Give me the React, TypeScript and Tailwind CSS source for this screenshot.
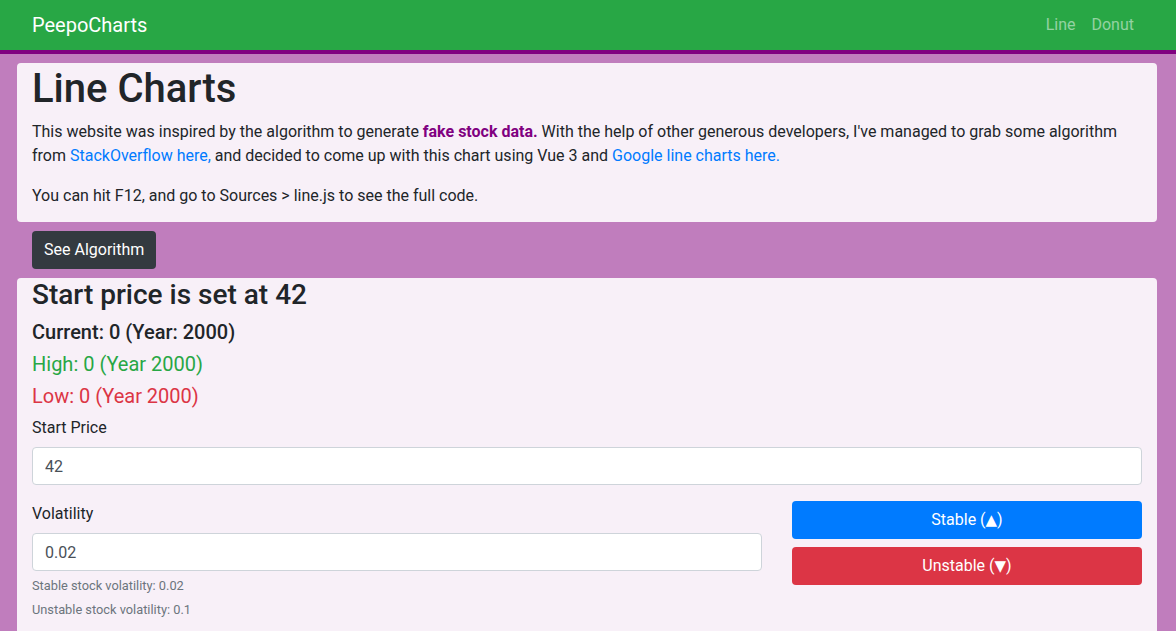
export default function App() {
  return (
    <div className="min-h-screen bg-[#c07dbd] font-['Roboto',sans-serif] text-[16px] leading-[24px] text-[#212529]">
      <nav className="flex h-[54px] items-center justify-between border-b-4 border-[#800080] bg-[#28a745] pl-8 pr-[34px]">
        <a href="#" className="text-[20px] leading-[30px] text-white">
          PeepoCharts
        </a>
        <div className="flex">
          <a href="#" className="px-2 text-white/50">
            Line
          </a>
          <a href="#" className="px-2 text-white/50">
            Donut
          </a>
        </div>
      </nav>

      <main className="flex flex-col pl-[17px] pr-[19px] pt-[9px]">
        <section className="rounded bg-[#f8f0f8] px-[15px] pt-[2px] pb-[14px]">
          <h1 className="text-[40px] font-medium leading-[48px]">Line Charts</h1>
          <p className="mt-[7px]">
            This website was inspired by the algorithm to generate{" "}
            <strong className="font-bold text-[#800080]">fake stock data.</strong> With the help of other generous
            developers, I've managed to grab some algorithm from{" "}
            <a href="#" className="text-[#007bff]">
              StackOverflow here,
            </a>{" "}
            and decided to come up with this chart using Vue 3 and{" "}
            <a href="#" className="text-[#007bff]">
              Google line charts here.
            </a>
          </p>
          <p className="mt-4">You can hit F12, and go to Sources &gt; line.js to see the full code.</p>
        </section>

        <div className="px-[15px] pt-[9px] pb-[9px]">
          <button className="h-[38px] rounded bg-[#343a40] px-3 text-white">See Algorithm</button>
        </div>

        <section className="rounded bg-[#f8f0f8] px-[15px] pb-10">
          <h3 className="mb-2 text-[28px] font-medium leading-[34px]">Start price is set at 42</h3>
          <h5 className="mb-2 text-[20px] font-medium leading-[24px]">Current: 0 (Year: 2000)</h5>
          <p className="mb-2 text-[20px] leading-[24px] text-[#28a745]">High: 0 (Year 2000)</p>
          <p className="mb-2 text-[20px] leading-[24px] text-[#dc3545]">Low: 0 (Year 2000)</p>

          <div className="mb-[17px]">
            <label className="mb-[7px] block">Start Price</label>
            <input
              type="text"
              defaultValue="42"
              className="block h-[38px] w-full rounded border border-[#ced4da] bg-white px-3 text-[#495057] outline-none"
            />
          </div>

          <div className="-mx-[15px] flex">
            <div className="w-8/12 px-[15px]">
              <label className="mb-[7px] block">Volatility</label>
              <input
                type="text"
                defaultValue="0.02"
                className="block h-[38px] w-full rounded border border-[#ced4da] bg-white px-3 text-[#495057] outline-none"
              />
              <small className="mt-[5px] block text-[12.8px] leading-[19px] text-[#6c757d]">
                Stable stock volatility: 0.02
              </small>
              <small className="mt-[5px] block text-[12.8px] leading-[19px] text-[#6c757d]">
                Unstable stock volatility: 0.1
              </small>
            </div>
            <div className="-mt-px flex w-4/12 flex-col gap-2 px-[15px]">
              <button className="h-[38px] w-full rounded bg-[#007bff] text-white">
                Stable (<span className="font-['DejaVu_Sans',sans-serif] text-[15px]">▲</span>)
              </button>
              <button className="h-[38px] w-full rounded bg-[#dc3545] text-white">
                Unstable (<span className="font-['DejaVu_Sans',sans-serif] text-[15px]">▼</span>)
              </button>
            </div>
          </div>
        </section>
      </main>
    </div>
  );
}
